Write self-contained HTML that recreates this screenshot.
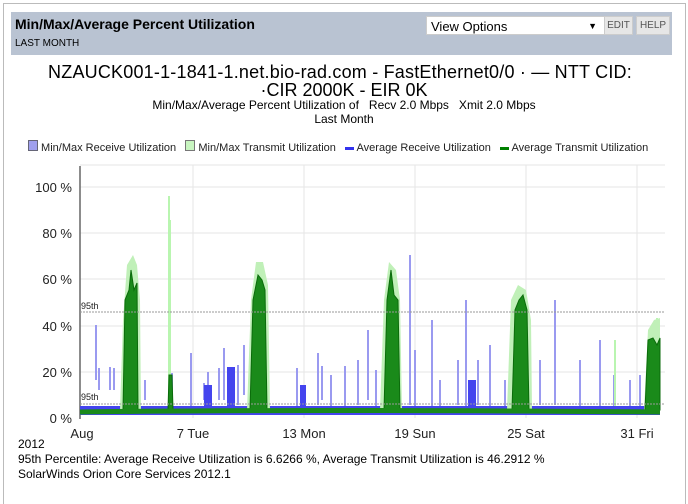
<!DOCTYPE html>
<html><head><meta charset="utf-8"><style>
body{margin:0;width:688px;height:499px;background:#fff;font-family:"Liberation Sans",sans-serif;position:relative;overflow:hidden}
.outer{position:absolute;left:3px;top:3px;width:681px;height:500px;border:1px solid #bbb;border-bottom:none}
.hdr{position:absolute;left:11px;top:12px;width:661px;height:43px;background:#b9c3d2}
.t{position:absolute;left:4px;top:4px;font-size:14px;font-weight:bold;color:#000}
.s{position:absolute;left:4px;top:26px;font-size:10px}
.sel{position:absolute;left:415px;top:4px;width:180px;height:19px;background:#fff;border:1px solid #ccc;font-size:13px;line-height:19px;padding-left:4px;box-sizing:border-box}
.btn{position:absolute;top:4px;height:17px;background:#e6e6e6;border:1px solid #ccc;font-size:10px;color:#555;line-height:17px;text-align:center}
.c{position:absolute;left:0;width:688px;text-align:center;color:#000}
.f{position:absolute;left:18px;font-size:12px;color:#000}
</style></head><body>
<div class="outer"></div>
<div class="hdr"><div class="t">Min/Max/Average Percent Utilization</div><div class="s">LAST MONTH</div>
<div class="sel">View Options<span style="position:absolute;right:8px;font-size:9px">▼</span></div>
<div class="btn" style="left:593px;width:27px">EDIT</div><div class="btn" style="left:625px;width:32px">HELP</div></div>
<div class="c" style="top:62px;font-size:18px;left:-4px;letter-spacing:0.2px">NZAUCK001-1-1841-1.net.bio-rad.com - FastEthernet0/0 · — NTT CID:</div>
<div class="c" style="top:80px;font-size:18px;left:0">·CIR 2000K - EIR 0K</div>
<div class="c" style="top:98px;font-size:12px;left:0">Min/Max/Average Percent Utilization of &nbsp; Recv 2.0 Mbps &nbsp; Xmit 2.0 Mbps</div>
<div class="c" style="top:112px;font-size:12px;left:0">Last Month</div>
<div style="position:absolute;top:140px;left:28px;font-size:11px;white-space:nowrap;color:#222">
<span style="display:inline-block;width:8px;height:9px;background:#a0a0ee;border:1px solid #667"></span> Min/Max Receive Utilization &nbsp;
<span style="display:inline-block;width:8px;height:9px;background:#c8f5c0;border:1px solid #777"></span> Min/Max Transmit Utilization &nbsp;
<span style="display:inline-block;width:9px;height:3px;background:#3333ee;vertical-align:middle"></span> Average Receive Utilization &nbsp;
<span style="display:inline-block;width:9px;height:3px;background:#008000;vertical-align:middle"></span> Average Transmit Utilization</div>
<svg style="position:absolute;left:0;top:0" width="688" height="499">
<g stroke="#e6e6e6" stroke-width="1">
<line x1="80" y1="187" x2="665" y2="187"/><line x1="80" y1="233" x2="665" y2="233"/><line x1="80" y1="279" x2="665" y2="279"/><line x1="80" y1="326" x2="665" y2="326"/><line x1="80" y1="372" x2="665" y2="372"/><line x1="80" y1="165" x2="665" y2="165"/>
<line x1="193" y1="165" x2="193" y2="418"/><line x1="304" y1="165" x2="304" y2="418"/><line x1="415" y1="165" x2="415" y2="418"/><line x1="526" y1="165" x2="526" y2="418"/><line x1="637" y1="165" x2="637" y2="418"/></g>
<line x1="80" y1="166" x2="80" y2="419" stroke="#666" stroke-width="1.5"/>
<g font-size="13" fill="#222" text-anchor="end"><text x="72" y="192">100 %</text><text x="72" y="238">80 %</text><text x="72" y="284">60 %</text><text x="72" y="331">40 %</text><text x="72" y="377">20 %</text><text x="72" y="423">0 %</text></g>
<g font-size="13" fill="#222" text-anchor="middle"><text x="82" y="438">Aug</text><text x="193" y="438">7 Tue</text><text x="304" y="438">13 Mon</text><text x="415" y="438">19 Sun</text><text x="526" y="438">25 Sat</text><text x="637" y="438">31 Fri</text></g>
<g stroke="#9a9af0" stroke-width="2">
<path d="M96 380V325M99 390V368M110 390V367M114 390V368M145 400V380M172 408V373M191 412V353M204 400V383M208 390V372M219 400V368M224 400V348M238 405V365M244 395V345M297 410V368M318 405V353M322 400V366M331 410V375M345 410V366M358 405V360M368 400V330M376 410V370M395 410V360M410 405V255M415 410V350M432 410V320M440 412V380M458 405V360M466 410V300M478 405V360M490 410V345M505 410V380M540 405V360M555 405V300M580 410V360M600 410V340M614 410V375M630 410V380M640 410V375"/></g>
<g stroke="#b9f5b0" stroke-width="2"><path d="M169 412V196M170 412V220M615 410V340M657 410V318M395 410V370"/></g>
<g fill="#4444ee"><rect x="80" y="406" width="580" height="9"/>
<rect x="227" y="367" width="8" height="45"/><rect x="204" y="385" width="8" height="25"/><rect x="300" y="385" width="6" height="25"/><rect x="468" y="380" width="8" height="30"/></g>
<g fill="#c0f0b8"><path d="M120 410 L123 320 L127 265 L133 255 L137 265 L140 300 L141 410Z M247 410 L251 300 L256 262 L263 262 L268 285 L270 410Z M380 410 L384 300 L389 262 L396 270 L400 300 L402 410Z M507 410 L511 300 L518 285 L526 290 L531 320 L532 410Z M644 410 L648 330 L654 320 L660 318 L660 410Z"/></g>
<g fill="#1a8a1a" stroke="#0b6b0b"><path d="M80 410 L123 410 L125 300 L129 290 L131 270 L134 290 L137 283 L138 410 Z M250 410 L253 300 L258 275 L262 280 L265 290 L267 410 Z M384 410 L387 300 L391 270 L394 295 L398 300 L400 410 Z M512 410 L515 310 L519 300 L523 295 L527 310 L529 410 Z M645 410 L648 340 L653 338 L657 345 L660 338 L660 410 Z M168 410 L169 375 L172 375 L173 410Z"/>
<path d="M80 412 Q300 409 660 412" stroke-width="5" fill="none" stroke="#1a8a1a"/></g>
<g stroke="#999" stroke-dasharray="2,1" stroke-width="1"><line x1="80" y1="312" x2="665" y2="312"/><line x1="80" y1="404" x2="665" y2="404"/></g>
<g font-size="9" fill="#222"><text x="81" y="309">95th</text><text x="81" y="400">95th</text></g>
</svg>
<div class="f" style="top:437px">2012</div>
<div class="f" style="top:452px">95th Percentile: Average Receive Utilization is 6.6266 %, Average Transmit Utilization is 46.2912 %</div>
<div class="f" style="top:467px">SolarWinds Orion Core Services 2012.1</div>
</body></html>
